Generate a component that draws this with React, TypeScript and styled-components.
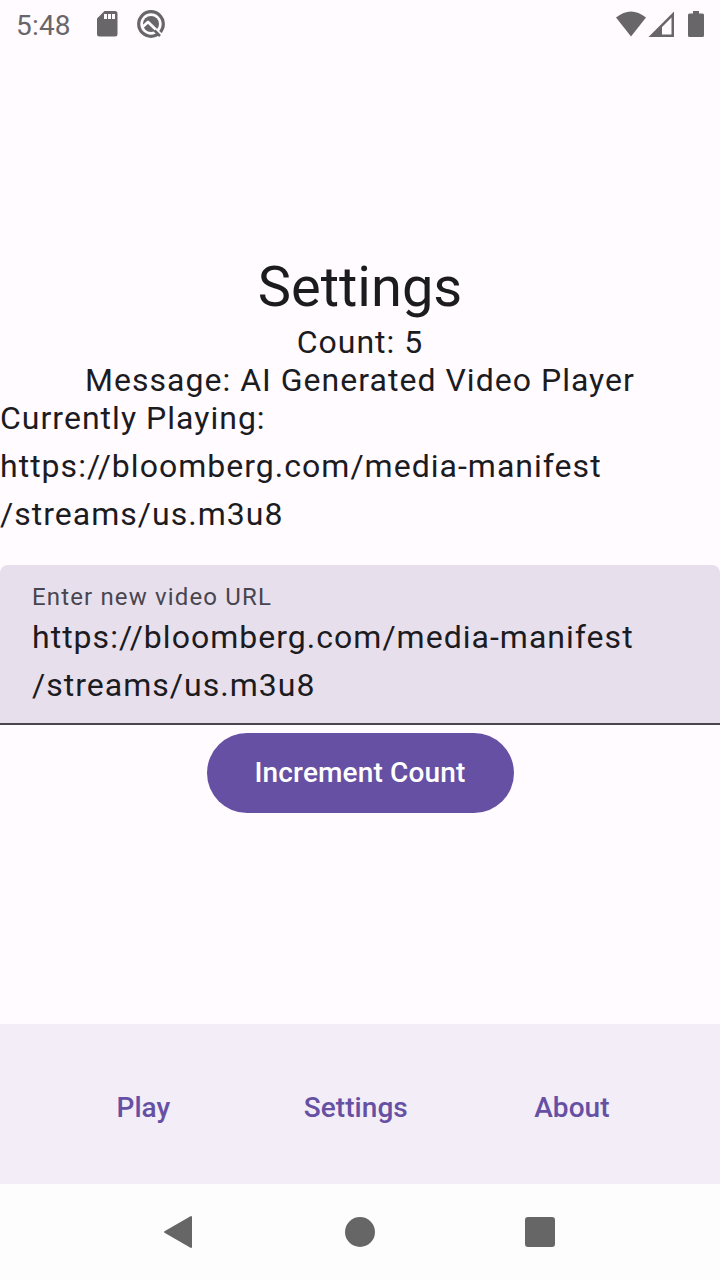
import React from 'react';
import styled, { createGlobalStyle } from 'styled-components';

const GlobalStyle = createGlobalStyle`
  * { box-sizing: border-box; }
  body { margin: 0; background: #fffbff; font-family: Roboto, sans-serif; color: #1c1b1f; }
`;
const Screen = styled.div`
  width: 720px;
  height: 1280px;
  display: flex;
  flex-direction: column;
  overflow: hidden;
`;
const StatusBar = styled.header`
  height: 48px;
  flex: none;
  display: flex;
  justify-content: space-between;
  color: #69666a;
`;
const StatusGroup = styled.div<{ $pad: string }>`
  display: flex;
  align-items: center;
  padding: ${p => p.$pad};
`;
const Clock = styled.span`
  font-size: 28px;
  line-height: 32px;
  letter-spacing: 0.2px;
  width: 80px;
  padding-top: 3px;
`;
const Content = styled.main`
  flex: 1;
  display: flex;
  flex-direction: column;
  align-items: center;
  padding-top: 206px;
`;
const Title = styled.h1`
  margin: 0 0 3px;
  font-weight: 400;
  font-size: 56px;
  line-height: 66px;
`;
const Line = styled.p<{ $height?: number; $left?: boolean; $gap?: number }>`
  margin: ${p => p.$gap ?? 0}px 0 0;
  font-size: 32px;
  letter-spacing: 1.02px;
  line-height: ${p => p.$height ?? 38}px;
  white-space: nowrap;
  align-self: ${p => (p.$left ? 'flex-start' : 'center')};
`;
const Field = styled.label`
  width: 720px;
  height: 160px;
  margin-top: 27px;
  padding: 16px 32px 0;
  background: #e7e0ec;
  border-bottom: 2px solid #49454f;
  border-radius: 8px 8px 0 0;
`;
const FieldLabel = styled.div`
  font-size: 24px;
  line-height: 32px;
  letter-spacing: 1.15px;
  color: #49454f;
`;
const Button = styled.button`
  width: 307px;
  height: 80px;
  margin-top: 8px;
  border: 0;
  border-radius: 40px;
  background: #6650a4;
  color: #fff;
  font: 500 28px/40px Roboto, sans-serif;
  letter-spacing: 0.15px;
  padding: 0;
`;
const Tabs = styled.nav`
  height: 160px;
  flex: none;
  background: #f3edf7;
  display: flex;
  justify-content: space-evenly;
  align-items: center;
  padding: 8px 8px 0 7px;
`;
const Tab = styled.a`
  min-width: 116px;
  padding: 0 24px;
  text-align: center;
  color: #6650a4;
  font-weight: 500;
  font-size: 28px;
  line-height: 40px;
  letter-spacing: 0.05px;
`;
const SystemBar = styled.footer`
  height: 96px;
  flex: none;
  background: #fdfdfd;
`;

export default function App() {
  return (
    <Screen>
      <GlobalStyle />
      <StatusBar>
        <StatusGroup $pad="0 0 0 16px">
          <Clock>5:48</Clock>
          <svg width="84" height="48" viewBox="96 0 84 48">
            <path fill="#69666a" fillRule="evenodd" d="M104.500 11h10.500a2.500 2.500 0 0 1 2.500 2.500v20.500a2.500 2.500 0 0 1-2.500 2.500H99.500a2.500 2.500 0 0 1-2.500-2.500V18.500zM104 14v5h3v-5zM108 14v5h3v-5zM112 14v5h3v-5z" />
            <circle cx="151" cy="24" r="12.300" fill="none" stroke="#69666a" strokeWidth="3.200" />
            <circle cx="151" cy="24" r="8" fill="#69666a" />
            <path fill="none" stroke="#fffbff" strokeWidth="2.800" strokeLinejoin="round" d="M142 27.500L148 22L163 36.500" />
            <path fill="none" stroke="#69666a" strokeWidth="2.600" d="M154.500 30.500L160 36" />
          </svg>
        </StatusGroup>
        <StatusGroup $pad="0">
          <svg width="110" height="48" viewBox="610 0 110 48">
            <g fill="#69666a">
              <path d="M616 17.500Q631 5.500 646 17.500L631 36.500z" />
              <path fillRule="evenodd" d="M648.500 37L674 11.500V37zM662 34.500H671.500V17.500L662 27z" />
              <path d="M693 11h6v2.500h3.500a1.500 1.500 0 0 1 1.500 1.500v20.500a1.500 1.500 0 0 1-1.500 1.500h-13a1.500 1.500 0 0 1-1.500-1.500V15a1.500 1.500 0 0 1 1.500-1.500h3.500z" />
            </g>
          </svg>
        </StatusGroup>
      </StatusBar>
      <Content>
        <Title>Settings</Title>
        <Line>Count: 5</Line>
        <Line>Message: AI Generated Video Player</Line>
        <Line $left>Currently Playing:</Line>
        <Line $left $height={48} $gap={5}>https://bloomberg.com/media-manifest<br />/streams/us.m3u8</Line>
        <Field>
          <FieldLabel>Enter new video URL</FieldLabel>
          <Line $height={48}>https://bloomberg.com/media-manifest<br />/streams/us.m3u8</Line>
        </Field>
        <Button>Increment Count</Button>
      </Content>
      <Tabs>
        <Tab>Play</Tab>
        <Tab>Settings</Tab>
        <Tab>About</Tab>
      </Tabs>
      <SystemBar>
        <svg width="720" height="96" viewBox="0 1184 720 96" fill="#666">
          <path d="M165 1232L191 1217V1247z" stroke="#666" strokeWidth="2" strokeLinejoin="round" />
          <circle cx="360" cy="1232" r="15" />
          <rect x="525" y="1217" width="30" height="30" rx="3" />
        </svg>
      </SystemBar>
    </Screen>
  );
}
